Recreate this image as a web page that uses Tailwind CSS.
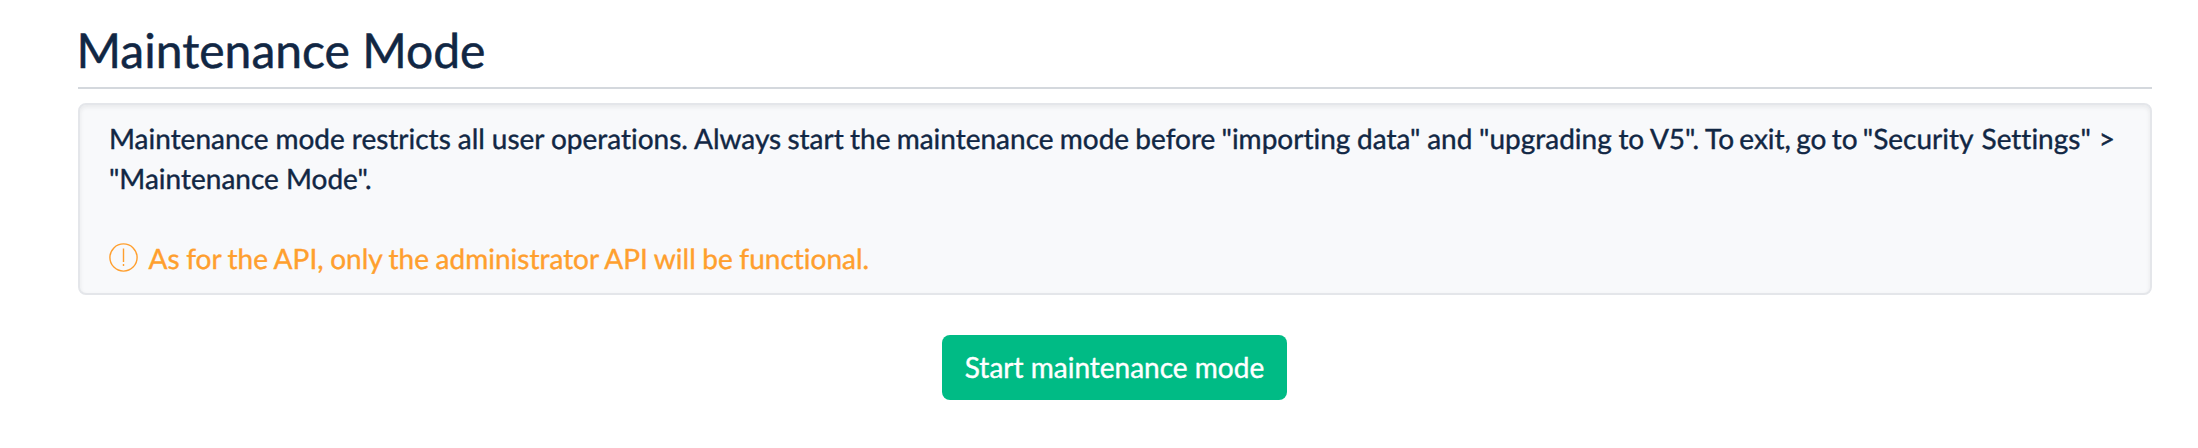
<!DOCTYPE html>
<html lang="en"><head><meta charset="utf-8"><title>Maintenance Mode</title>
<script src="https://cdn.jsdelivr.net/npm/@tailwindcss/browser@4"></script></head>
<body class="bg-white text-[#112744] font-['Lato',sans-serif] h-[448px] overflow-hidden [font-variant-ligatures:none] [text-rendering:geometricPrecision]">
<main class="ml-[78px] w-[2074px] pt-[15px]">
<h1 class="h-[74px] border-b-2 border-[#d4d8dd] text-[48px] leading-[72px] font-normal indent-[-1.5px] [-webkit-text-stroke:0.5px]">Maintenance Mode</h1>
<section class="mt-[14px] h-[192px] rounded-lg border-2 border-[#e4e6ea] bg-[#f8f9fb] px-[29px] pt-[13px] text-[28px] leading-[40px] font-normal shadow-[inset_0_2px_4px_rgba(34,36,38,0.08)] [-webkit-text-stroke:0.4px]">
<p class="whitespace-nowrap"><span class="[word-spacing:-0.2px]">Maintenance mode restricts all user operations. Always</span><span class="[word-spacing:-0.95px]"> start the maintenance mode before "importing</span><span class="[word-spacing:-0.5px]"> data" and "upgrading to V5". To</span><span class="[word-spacing:-1.9px]"> exit, go to "Security</span><span class="[word-spacing:0.9px]"> Settings" &gt;</span><br>"Maintenance Mode".</p>
<p class="mt-[40px] flex items-center gap-[10.5px] text-[#ff9f2e]"><svg class="size-[29px] -mt-0.5" viewBox="0 0 29 29" fill="none" stroke="currentColor" stroke-width="1.4"><circle cx="14.5" cy="14.5" r="13.6"/><path d="M14.5 5.5v13.5M14.5 21v2"/></svg><span class="[word-spacing:-0.6px]">As for the API, only the administrator API will be functional.</span></p>
</section>
<div class="mt-[40px] -ml-px flex justify-center"><button class="h-[65px] w-[345px] rounded-lg bg-[#00bb85] pb-0.5 text-[28px] font-normal text-white [-webkit-text-stroke:0.4px]">Start maintenance mode</button></div>
</main></body></html>
